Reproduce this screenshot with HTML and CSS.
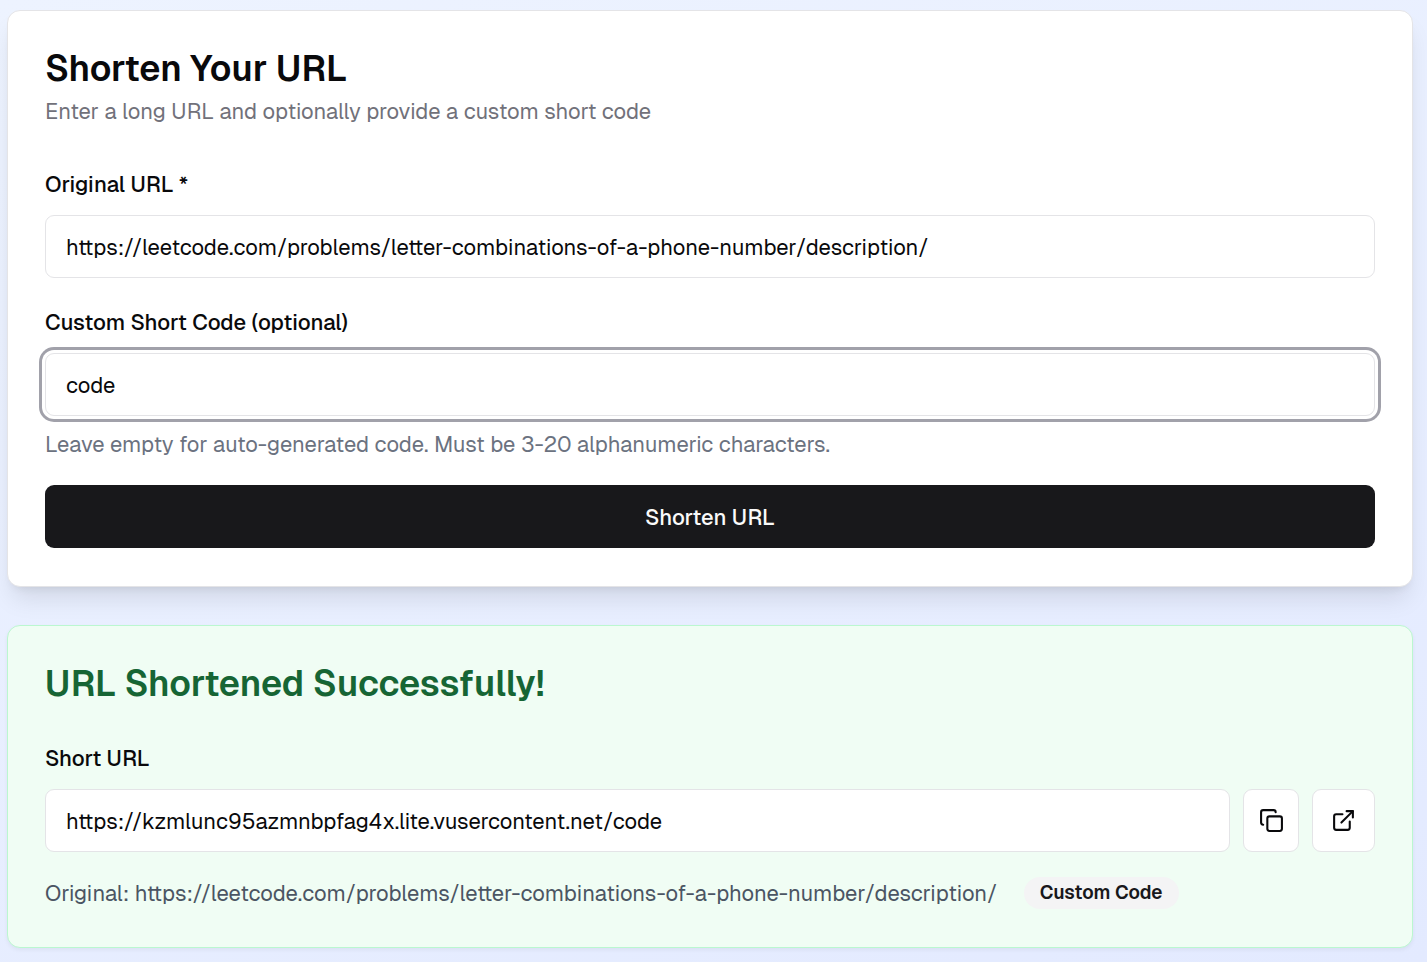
FILE: index.html
```html
<!DOCTYPE html>
<html lang="en">
<head>
<meta charset="utf-8">
<meta name="viewport" content="width=device-width, initial-scale=1">
<title>URL Shortener</title>
<link rel="stylesheet" href="styles.css">
</head>
<body>
<main class="page">
  <section class="card">
    <header class="card-header">
      <h1 class="title">Shorten Your URL</h1>
      <p class="subtitle">Enter a long URL and optionally provide a custom short code</p>
    </header>
    <form class="form">
      <div class="field">
        <label class="label" for="original">Original URL *</label>
        <input class="input" id="original" type="text" value="https://leetcode.com/problems/letter-combinations-of-a-phone-number/description/">
      </div>
      <div class="field">
        <label class="label" for="custom">Custom Short Code (optional)</label>
        <input class="input input-active" id="custom" type="text" value="code">
        <p class="hint">Leave empty for auto-generated code. Must be 3-20 alphanumeric characters.</p>
      </div>
      <button class="submit" type="button">Shorten URL</button>
    </form>
  </section>
  <section class="card card-success">
    <h2 class="title title-success">URL Shortened Successfully!</h2>
    <div class="field">
      <label class="label" for="short">Short URL</label>
      <div class="row">
        <input class="input" id="short" type="text" readonly value="https://kzmlunc95azmnbpfag4x.lite.vusercontent.net/code">
        <button class="icon-button" type="button" aria-label="Copy">
          <svg class="icon" viewBox="0 0 24 24"><rect x="8" y="8" width="14" height="14" rx="2"/><path d="M4 16c-1.100 0-2-.9-2-2V4c0-1.100.9-2 2-2h10c1.100 0 2 .9 2 2"/></svg>
        </button>
        <button class="icon-button icon-button-wide" type="button" aria-label="Open">
          <svg class="icon" viewBox="0 0 24 24"><path d="M15 3h6v6"/><path d="M10 14 21 3"/><path d="M18 13v6a2 2 0 0 1-2 2H5a2 2 0 0 1-2-2V8a2 2 0 0 1 2-2h6"/></svg>
        </button>
      </div>
    </div>
    <div class="meta">
      <span class="origin">Original: https://leetcode.com/problems/letter-combinations-of-a-phone-number/description/</span>
      <span class="badge">Custom Code</span>
    </div>
  </section>
</main>
</body>
</html>
```
FILE: styles.css
```css
* { box-sizing: border-box; }
body {
  margin: 0;
  min-height: 100vh;
  background: linear-gradient(160deg, #edf3ff, #e3eaff);
  color: #09090b;
  font-family: Geist, Inter, sans-serif;
  font-size: 22px;
  line-height: 32px;
}
h1, h2, p { margin: 0; }
.page {
  display: flex;
  flex-direction: column;
  gap: 38px;
  padding: 10px 14px 13px 7px;
}
.card {
  padding: 38px 37px;
  background: #fff;
  border: 1px solid #e4e4e7;
  border-radius: 13px;
  box-shadow: 0 16px 24px -5px rgb(0 0 0 / 10%), 0 6px 10px -6px rgb(0 0 0 / 10%);
}
.card-success {
  background: #f0fdf4;
  border-color: #bbf7d0;
  box-shadow: 0 2px 4px rgb(0 0 0 / 5%);
}
.card-header { margin-bottom: 38px; }
.title {
  font-size: 36px;
  font-weight: 600;
  line-height: 40px;
}
.subtitle { margin-top: 6px; color: #71717a; }
.hint { color: #6b7280; }
.title-success { color: #166534; margin-bottom: 35px; }
.form { display: flex; flex-direction: column; gap: 25px; }
.field { display: flex; flex-direction: column; gap: 12px; }
.label { font-weight: 500; line-height: 38px; }
.input {
  width: 100%;
  min-width: 0;
  height: 63px;
  padding: 0 20px;
  border: 1px solid #e4e4e7;
  border-radius: 9px;
  background: #fff;
  color: #09090b;
  font: inherit;
  outline: none;
}
.input-active { box-shadow: 0 0 0 3px #fff, 0 0 0 6px #a1a1aa; }
.submit {
  height: 63px;
  border: 0;
  border-radius: 9px;
  background: #18181b;
  color: #fafafa;
  font: inherit;
  font-weight: 500;
}
.row { display: flex; gap: 13px; }
.icon-button {
  display: flex;
  flex: none;
  align-items: center;
  justify-content: center;
  width: 56px;
  height: 63px;
  padding: 0;
  border: 1px solid #e4e4e7;
  border-radius: 9px;
  background: #fff;
  color: #09090b;
}
.icon-button-wide { width: 63px; }
.icon {
  width: 25px;
  height: 25px;
  fill: none;
  stroke: currentColor;
  stroke-width: 2;
  stroke-linecap: round;
  stroke-linejoin: round;
}
.meta { display: flex; align-items: center; gap: 26px; margin-top: 25px; }
.origin { color: #4b5563; }
.badge {
  padding: 0 16px;
  border-radius: 16px;
  background: #f4f4f5;
  color: #18181b;
  font-size: 19px;
  font-weight: 600;
}
```
